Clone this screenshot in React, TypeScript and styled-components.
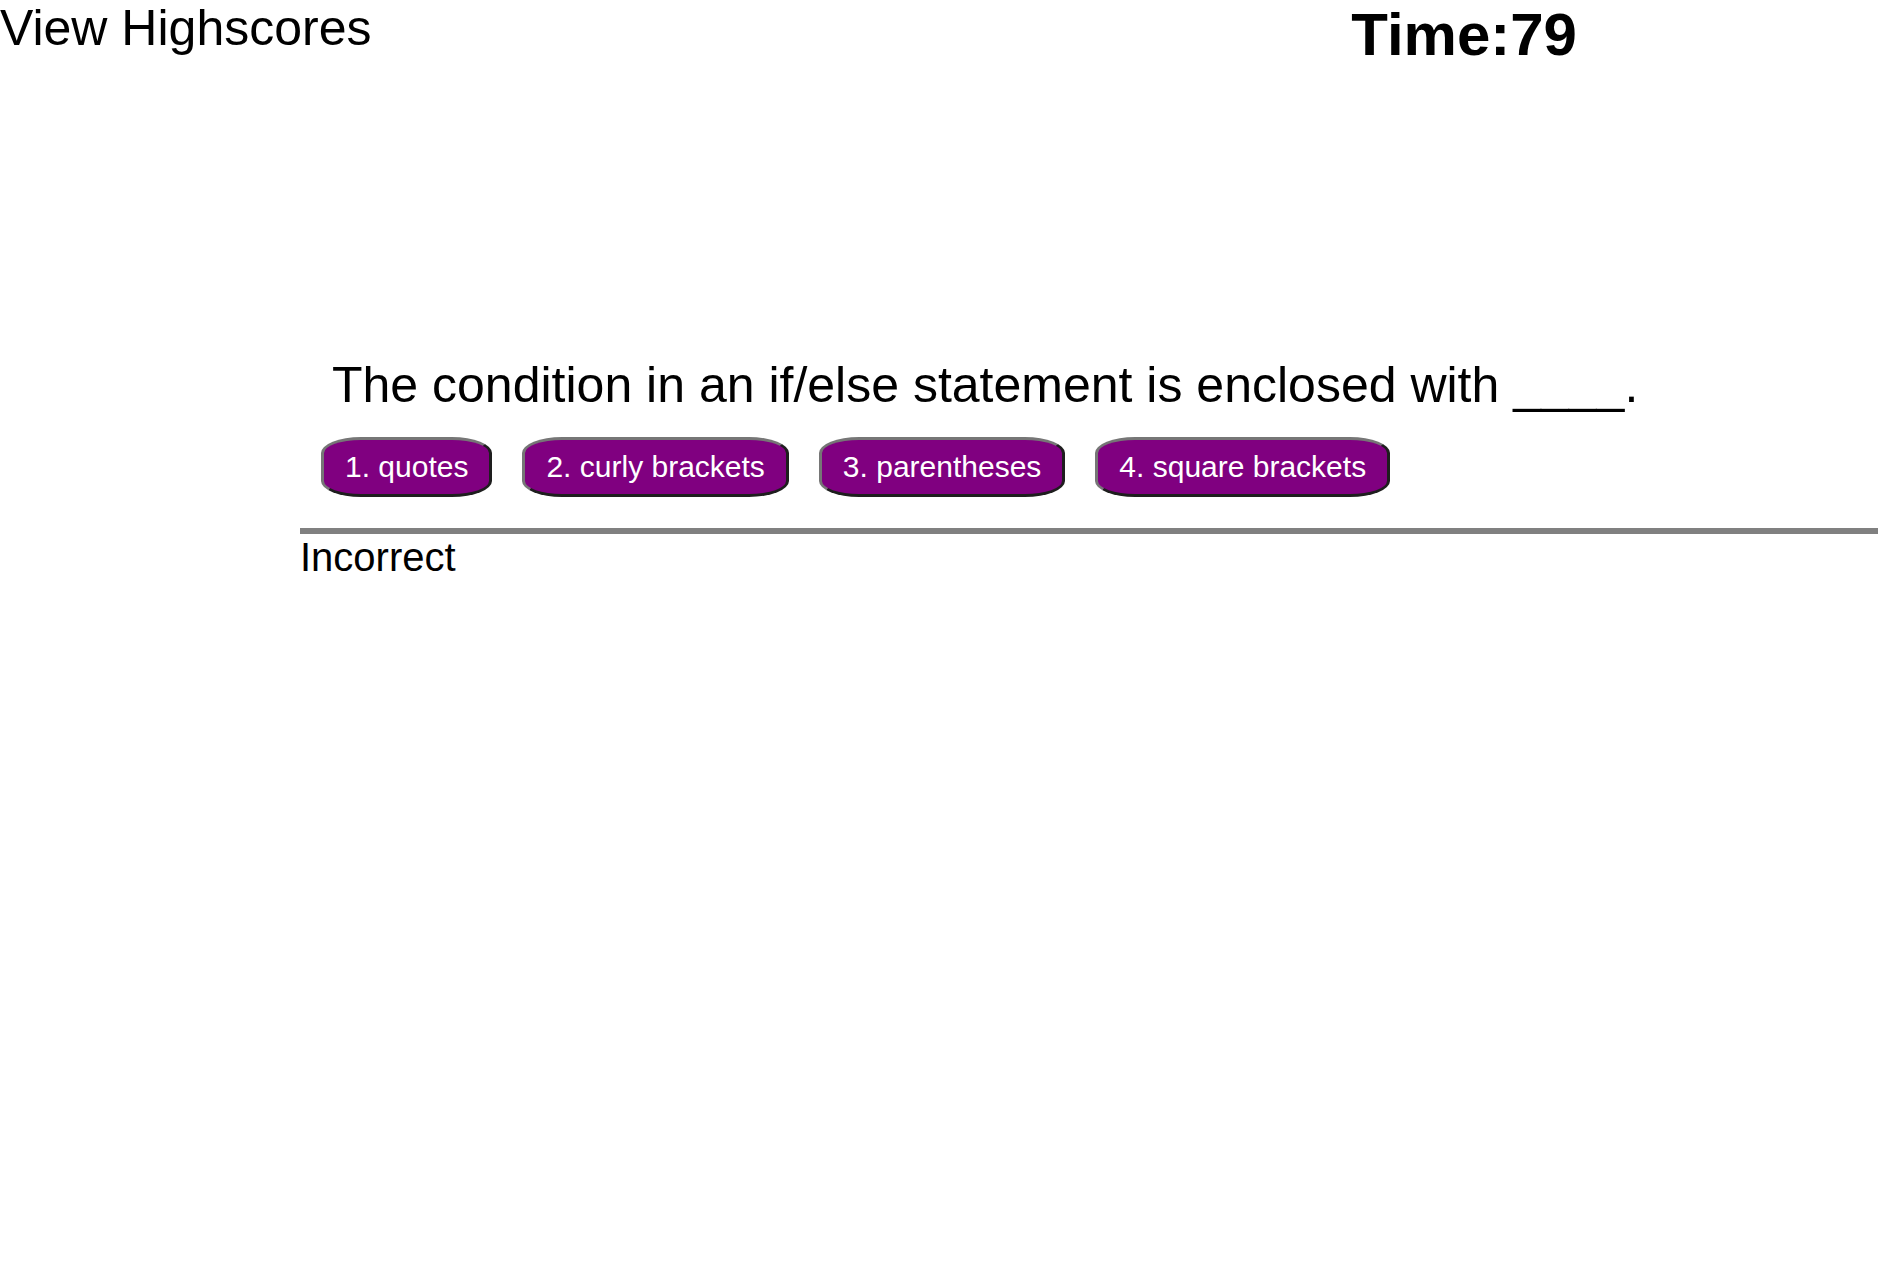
import React from "react";
import styled, { createGlobalStyle } from "styled-components";

const Global = createGlobalStyle`
  html, body {
    margin: 0;
    padding: 0;
    background: #ffffff;
    font-family: "Liberation Sans", Arial, sans-serif;
    color: #000000;
  }
`;

const Header = styled.header`
  display: flex;
  justify-content: space-between;
  align-items: flex-start;
  padding-right: 301px;
`;

const HighscoresLink = styled.a`
  font-size: 50px;
  line-height: 57px;
  color: #000;
  text-decoration: none;
  cursor: pointer;
`;

const Timer = styled.div`
  font-size: 60px;
  font-weight: bold;
  line-height: 69px;
`;

const Quiz = styled.main`
  margin-left: 300px;
  margin-top: 288px;
  display: flex;
  flex-direction: column;
`;

const Question = styled.h2`
  margin: 0;
  padding-left: 32px;
  font-size: 50px;
  font-weight: normal;
  line-height: 57px;
`;

const Choices = styled.div`
  display: flex;
  gap: 30px;
  padding-left: 21px;
  margin-top: 23px;
`;

const Choice = styled.button`
  font-family: "Liberation Sans", Arial, sans-serif;
  font-size: 30px;
  line-height: 34px;
  color: #ffffff;
  background: #800080;
  padding: 10px 21px;
  border: 3px solid;
  border-color: #767676 #1e1e1e #1e1e1e #767676;
  border-radius: 40px / 16px;
  cursor: pointer;
`;

const Feedback = styled.div`
  margin-top: 31px;
  border-top: 6px solid #808080;
  font-size: 40px;
  line-height: 46px;
`;

const choices = ["1. quotes", "2. curly brackets", "3. parentheses", "4. square brackets"];

export default function App() {
  return (
    <>
      <Global />
      <Header>
        <HighscoresLink>View Highscores</HighscoresLink>
        <Timer>Time:79</Timer>
      </Header>
      <Quiz>
        <Question>The condition in an if/else statement is enclosed with ____.</Question>
        <Choices>
          {choices.map((c) => (
            <Choice key={c}>{c}</Choice>
          ))}
        </Choices>
        <Feedback>Incorrect</Feedback>
      </Quiz>
    </>
  );
}
